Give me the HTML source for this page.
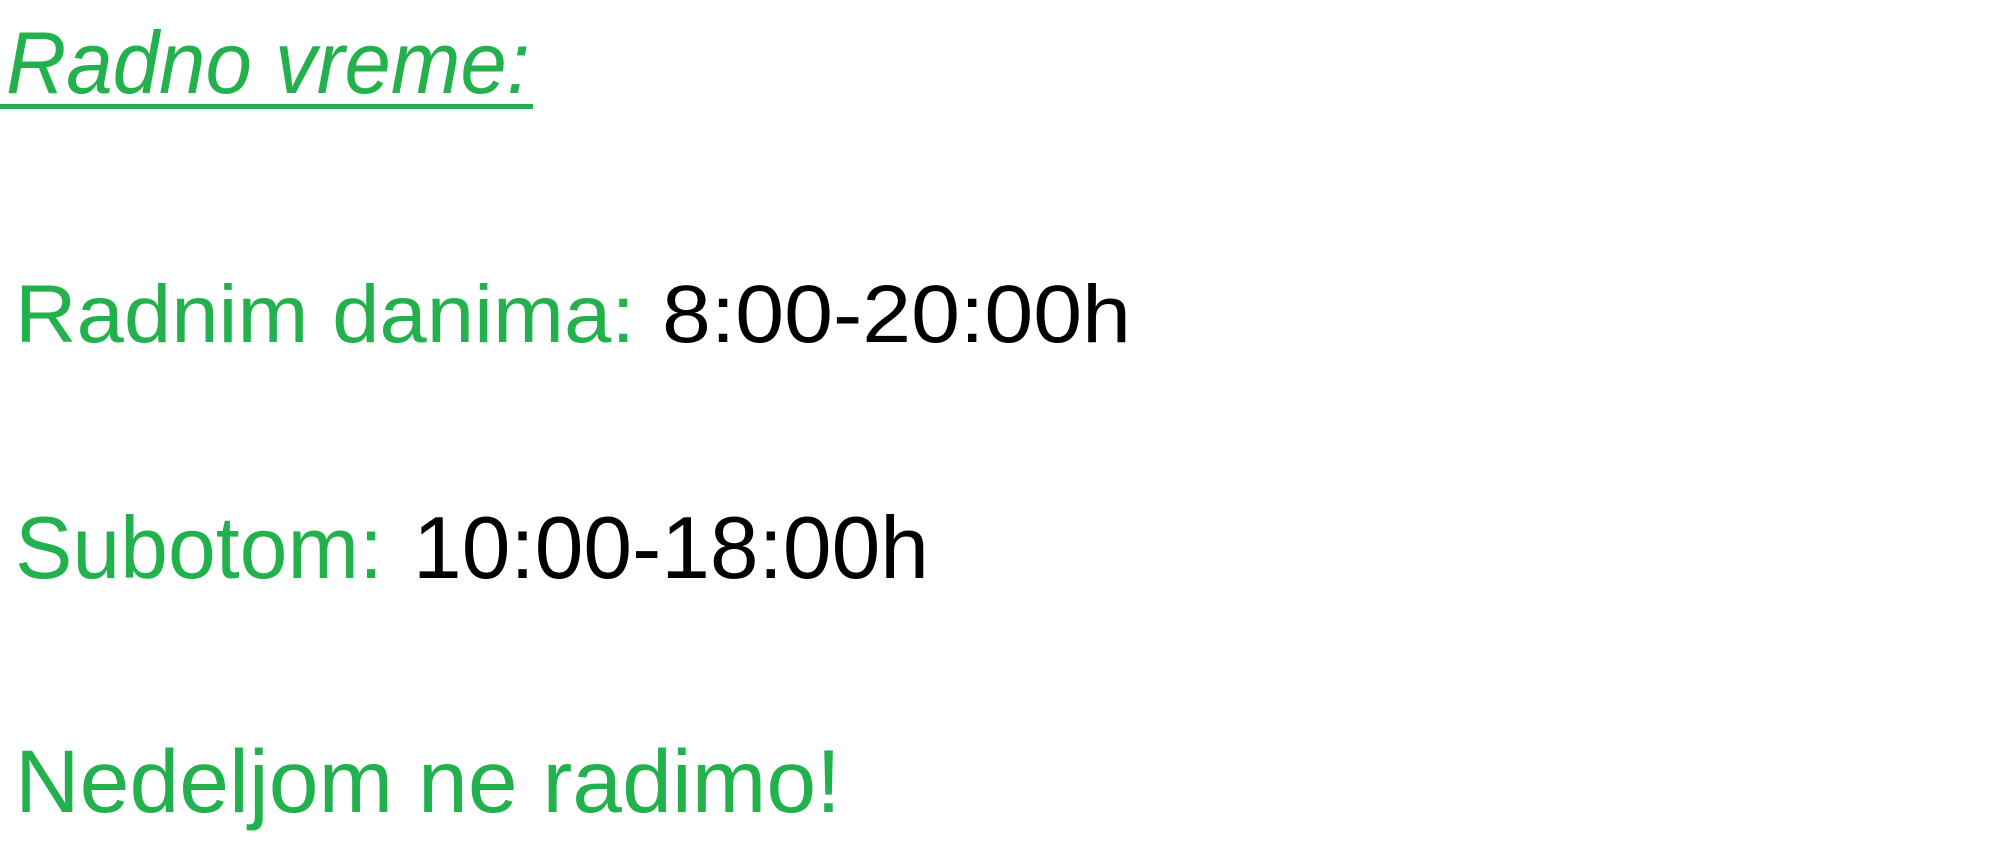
<!DOCTYPE html>
<html><head><style>html,body{margin:0;padding:0;background:#fff;width:2004px;height:856px;overflow:hidden}</style></head>
<body>
<svg width="2004" height="856" xmlns="http://www.w3.org/2000/svg" style="display:block">
<g font-family="Liberation Sans, sans-serif" fill="#22b14c">
<text x="6" y="93" font-size="88" font-style="italic" textLength="524" lengthAdjust="spacingAndGlyphs">Radno vreme:</text>
<rect x="0" y="104" width="533" height="5" fill="#22b14c"/>
<text x="15" y="342" font-size="82" textLength="620" lengthAdjust="spacingAndGlyphs">Radnim danima:</text>
<text x="662" y="342" font-size="82" fill="#000" textLength="469" lengthAdjust="spacingAndGlyphs">8:00-20:00h</text>
<text x="15" y="578" font-size="88" textLength="368" lengthAdjust="spacingAndGlyphs">Subotom:</text>
<text x="413" y="578" font-size="88" fill="#000" textLength="516" lengthAdjust="spacingAndGlyphs">10:00-18:00h</text>
<text x="15" y="812" font-size="89" textLength="826" lengthAdjust="spacingAndGlyphs">Nedeljom ne radimo!</text>
</g>
</svg>
</body></html>
